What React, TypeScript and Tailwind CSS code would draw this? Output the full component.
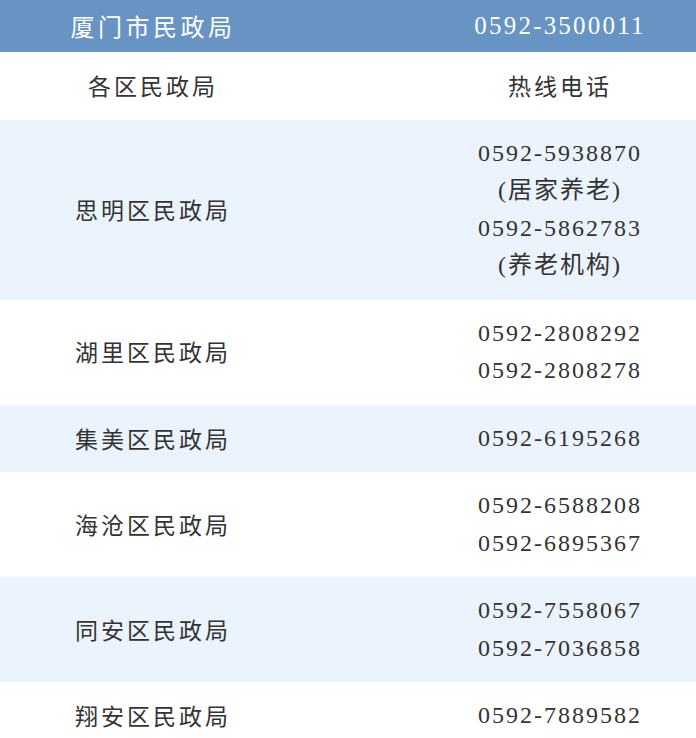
const rows: { name: string; phones: string[] }[] = [
  { name: '思明区民政局', phones: ['0592-5938870', '(居家养老)', '0592-5862783', '(养老机构)'] },
  { name: '湖里区民政局', phones: ['0592-2808292', '0592-2808278'] },
  { name: '集美区民政局', phones: ['0592-6195268'] },
  { name: '海沧区民政局', phones: ['0592-6588208', '0592-6895367'] },
  { name: '同安区民政局', phones: ['0592-7558067', '0592-7036858'] },
  { name: '翔安区民政局', phones: ['0592-7889582'] },
];

const cjk = "font-['Noto_Sans_CJK_SC',sans-serif]";
const serif = "font-['Liberation_Serif','Noto_Sans_CJK_SC',serif]";

export default function App() {
  return (
    <div className="w-[696px] h-[738px] overflow-hidden bg-white text-[#333]">
      {/* Header */}
      <div className="grid grid-cols-[306px_1fr] h-[52px] items-center bg-[#6894c4] text-white">
        <div className={`text-center text-[24px] tracking-[3.5px] ${cjk}`}>厦门市民政局</div>
        <div className={`pl-[118px] text-center text-[25px] tracking-[2.2px] ${serif}`}>0592-3500011</div>
      </div>

      {/* Column titles */}
      <div className="grid grid-cols-[306px_1fr] items-center py-[15px] leading-[37.5px]">
        <div className={`text-center text-[23px] tracking-[3px] ${cjk}`}>各区民政局</div>
        <div className={`pl-[118px] text-center text-[23px] tracking-[3px] ${cjk}`}>热线电话</div>
      </div>

      {rows.map((row, i) => (
        <div
          key={row.name}
          className={`grid grid-cols-[306px_1fr] items-center py-[15px] leading-[37.5px] ${
            i % 2 === 0 ? 'bg-[#ebf4fd]' : 'bg-white'
          }`}
        >
          <div className={`text-center text-[23px] tracking-[3px] ${cjk}`}>{row.name}</div>
          <div className="pl-[118px] flex flex-col items-center">
            {row.phones.map((p) => (
              <div key={p} className={`text-[24px] tracking-[2px] ${serif}`}>
                {p}
              </div>
            ))}
          </div>
        </div>
      ))}
    </div>
  );
}
